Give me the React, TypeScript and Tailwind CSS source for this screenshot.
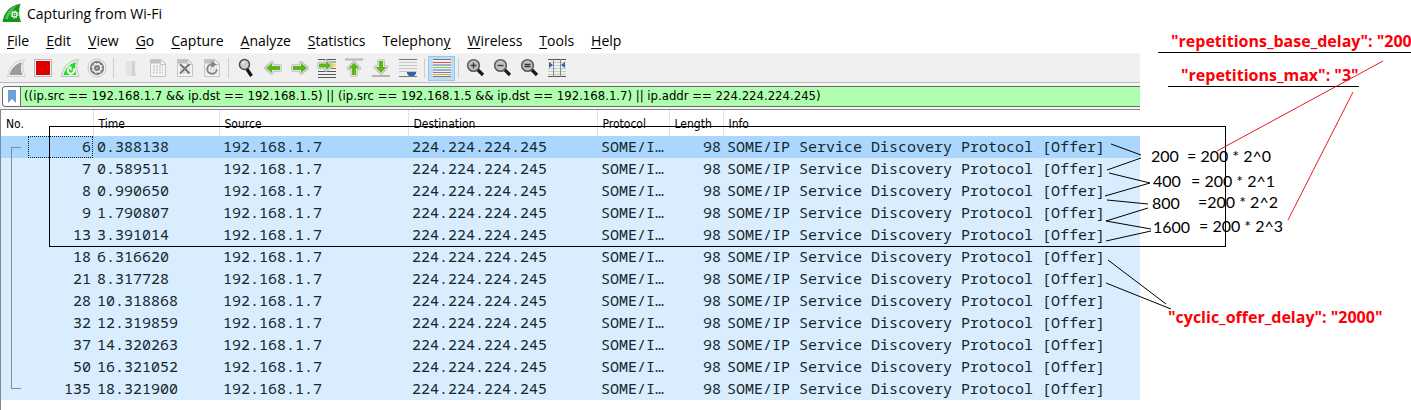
import type { ReactNode } from "react";

const menus: [string, string, string][] = [
  ["", "F", "ile"],
  ["", "E", "dit"],
  ["", "V", "iew"],
  ["", "G", "o"],
  ["", "C", "apture"],
  ["", "A", "nalyze"],
  ["", "S", "tatistics"],
  ["Telephon", "y", ""],
  ["", "W", "ireless"],
  ["", "T", "ools"],
  ["", "H", "elp"],
];

const packets: [string, string][] = [
  ["6", "0.388138"],
  ["7", "0.589511"],
  ["8", "0.990650"],
  ["9", "1.790807"],
  ["13", "3.391014"],
  ["18", "6.316620"],
  ["21", "8.317728"],
  ["28", "10.318868"],
  ["32", "12.319859"],
  ["37", "14.320263"],
  ["50", "16.321052"],
  ["135", "18.321900"],
];

function Icon({ children }: { children: ReactNode }) {
  return (
    <svg viewBox="0 0 20 20" className="size-5" fill="none" aria-hidden="true">
      {children}
    </svg>
  );
}

function ToolButton({ label, active, children }: { label: string; active?: boolean; children: ReactNode }) {
  return (
    <button
      type="button"
      aria-label={label}
      className={
        active
          ? "flex h-[25px] w-[27px] shrink-0 items-center justify-center border border-[#90c8f6] bg-[#c0dcf3]"
          : "flex h-[25px] w-[27px] shrink-0 items-center justify-center"
      }
    >
      <Icon>{children}</Icon>
    </button>
  );
}

function Separator() {
  return (
    <div className="flex w-[7px] shrink-0 justify-center">
      <div className="h-5 w-px bg-[#cdcdcd]" />
    </div>
  );
}

function Sheet({ children }: { children?: ReactNode }) {
  return (
    <>
      <path d="M2.500 1.500h10.500l4.500 4.500v12.500h-15z" fill="#f4f4f4" stroke="#c4c4c4" />
      <path d="M3 2h9v3.500H3z" fill="#c2c2c2" />
      <path d="M12.500 1.500v5h5z" fill="#fafafa" stroke="#c4c4c4" />
      <path d="M5 8.500h10M5 11.500h10M5 14.500h10" stroke="#d0d0d0" strokeWidth="2" strokeDasharray="2 1" />
      {children}
    </>
  );
}

function Magnifier({ children }: { children?: ReactNode }) {
  return (
    <>
      <path d="M11.500 11.500l5.500 5.500" stroke="#1c1c1c" strokeWidth="3.200" />
      <circle cx="7.500" cy="7.500" r="5.800" fill="#c2c2c2" stroke="#5c5c5c" strokeWidth="1.600" />
      {children}
    </>
  );
}

function Arrow({ d }: { d: string }) {
  return (
    <>
      <path d={d} stroke="#bcbcbc" strokeWidth="3.600" strokeLinejoin="round" />
      <path d={d} fill="#5cb51a" stroke="#eef2ea" strokeWidth="1.400" strokeLinejoin="round" />
      <path d={d} fill="#5cb51a" />
    </>
  );
}

function Toolbar() {
  return (
    <div
      role="toolbar"
      aria-label="Main toolbar"
      className="flex h-[30px] items-center border-t border-b border-t-[#f6f6f6] border-b-[#bcbcbc] bg-[#f0f0f0] pl-0.5"
    >
      <ToolButton label="Start capture">
        <path d="M1.500 18.500C3 10 7 3.500 18.500 1.500c-2.500 5-2 11 .5 17z" fill="#f4f4f4" stroke="#cfcfcf" />
        <path d="M3.500 17C5 11 9 6 16 4c-1.500 4.500-1.200 9 .5 13z" fill="#9b9b9b" />
      </ToolButton>
      <ToolButton label="Stop capture">
        <path d="M1.500 1.500h17v17h-17z" fill="#f4f4f4" stroke="#b5b5b5" />
        <path d="M3 3h14v14H3z" fill="#dc0000" />
      </ToolButton>
      <ToolButton label="Restart capture">
        <path d="M1.500 18.500C3 10 7 3.500 18.500 1.500c-2.500 5-2 11 .5 17z" fill="#f4f4f4" stroke="#bdbdbd" />
        <path d="M3.500 17C5 11 9 6 16 4c-1.500 4.500-1.200 9 .5 13z" fill="#1fe01f" />
        <path d="M8.500 10.500a3.100 3.100 0 1 0 4.800 0" stroke="#fff" strokeWidth="1.800" />
        <path d="M7 8.500h4.500V13z" fill="#fff" />
      </ToolButton>
      <ToolButton label="Capture options">
        <circle cx="10" cy="10" r="9" fill="#f4f4f4" stroke="#c8c8c8" />
        <circle cx="10" cy="10" r="7.200" fill="#808080" />
        <circle cx="10" cy="10" r="4.500" fill="#f0f0f0" />
        <circle cx="10" cy="10" r="4.600" stroke="#f0f0f0" strokeWidth="1.600" strokeDasharray="1.800 1.813" />
        <circle cx="10" cy="10" r="3" fill="#777" />
        <circle cx="10" cy="10" r="1.200" fill="#a8a8a8" />
      </ToolButton>
      <Separator />
      <ToolButton label="Open file">
        <path d="M4 3h7v15H5.500z" fill="#e3e3e3" />
        <path d="M11 3h3v11.500l1 3.500h-4z" fill="#d2d2d2" />
      </ToolButton>
      <ToolButton label="Save file">
        <Sheet />
      </ToolButton>
      <ToolButton label="Close file">
        <Sheet>
          <path d="M5 6l9.500 9.500M14.500 6L5 15.500" stroke="#757575" strokeWidth="1.800" />
        </Sheet>
      </ToolButton>
      <ToolButton label="Reload file">
        <Sheet>
          <path d="M10 6.200a4.800 4.800 0 1 0 4.800 5" stroke="#858585" strokeWidth="1.900" />
          <path d="M9.500 3l5 3.500-5 3.500z" fill="#858585" />
        </Sheet>
      </ToolButton>
      <Separator />
      <ToolButton label="Find packet">
        <path d="M10.500 10.500l5 7.500" stroke="#161616" strokeWidth="3.200" />
        <circle cx="8.500" cy="6.500" r="5" fill="#cfcfcf" stroke="#4c4c4c" strokeWidth="1.500" />
        <path d="M6 6a3 3 0 0 1 3-2" stroke="#fff" />
      </ToolButton>
      <ToolButton label="Previous packet">
        <Arrow d="M3 10l6-5v3h8v4H9v3z" />
      </ToolButton>
      <ToolButton label="Next packet">
        <Arrow d="M17 10l-6-5v3H3v4h8v3z" />
      </ToolButton>
      <ToolButton label="Go to packet">
        <path d="M1 1.500h18M1 13.500h18M1 16.500h18M1 19.500h18" stroke="#555" />
        <path d="M11 4h8M11 10.500h8" stroke="#777" />
        <path d="M13 5.500h6v3h-6z" fill="#f5df55" />
        <Arrow d="M14.500 7.500L9 3v2.500H2v4h7V12z" />
      </ToolButton>
      <ToolButton label="First packet">
        <path d="M1 1.500h18" stroke="#b5b5b5" strokeWidth="2" />
        <Arrow d="M10 4.500l5.500 6H12V17H8v-6.500H4.500z" />
      </ToolButton>
      <ToolButton label="Last packet">
        <path d="M1 18h18" stroke="#b5b5b5" strokeWidth="2" />
        <Arrow d="M10 15l5.500-6H12V3H8v6H4.500z" />
      </ToolButton>
      <ToolButton label="Auto scroll">
        <path d="M1 1.500h18M1 18.500h18" stroke="#777" />
        <path d="M1 4.500h18M1 7.500h18M1 10.500h18M1 13.500h18" stroke="#c6c9c2" />
        <path d="M9 14h9v1.500L16 18h-5l-2-2.500z" fill="#2f63ad" />
      </ToolButton>
      <Separator />
      <ToolButton label="Colorize packets" active>
        <path d="M1 1h18v18H1z" fill="#eef2ee" />
        <path d="M1 1.500h18M1 18.500h18" stroke="#777" />
        <path d="M1 4.500h18" stroke="#f04848" />
        <path d="M1 7h18" stroke="#4070c8" />
        <path d="M1 9.500h18" stroke="#87ce3c" />
        <path d="M1 12h18" stroke="#4866bb" />
        <path d="M1 14.500h18" stroke="#9175a8" />
        <path d="M1 16.500h18" stroke="#d7ad25" />
      </ToolButton>
      <Separator />
      <ToolButton label="Zoom in">
        <Magnifier>
          <path d="M4.500 7.500h6M7.500 4.500v6" stroke="#3c3c3c" strokeWidth="1.400" />
        </Magnifier>
      </ToolButton>
      <ToolButton label="Zoom out">
        <Magnifier>
          <path d="M4.500 7.500h6" stroke="#3c3c3c" strokeWidth="1.400" />
        </Magnifier>
      </ToolButton>
      <ToolButton label="Normal size">
        <Magnifier>
          <path d="M4.500 6.500h6M4.500 8.500h6" stroke="#3c3c3c" strokeWidth="1.300" />
        </Magnifier>
      </ToolButton>
      <ToolButton label="Resize columns">
        <path d="M1 1.500h18M1 18.500h18" stroke="#555" />
        <path d="M1 4.500h18M1 7.500h18M1 10.500h18M1 13.500h18M1 16.500h18" stroke="#c9ccc2" />
        <path d="M6.500 1v18M13.500 1v18" stroke="#8a8a8a" />
        <path d="M2 4l4 3-4 3zM18 4l-4 3 4 3z" fill="#2f63ad" />
      </ToolButton>
    </div>
  );
}

function Connector({ index }: { index: number }) {
  if (index === 0) return <span className="h-[11px] w-[10px] self-end border-t border-l border-[#858b91]" />;
  if (index === packets.length - 1)
    return <span className="h-[11px] w-[10px] self-start border-b border-l border-[#858b91]" />;
  return <span className="w-[10px] self-stretch border-l border-[#858b91]" />;
}

const headers = ["No.", "Time", "Source", "Destination", "Protocol", "Length", "Info"];

function PacketTable() {
  return (
    <table className="w-full table-fixed border-collapse">
      <colgroup>
        <col className="w-[92px]" />
        <col className="w-[126px]" />
        <col className="w-[189px]" />
        <col className="w-[189px]" />
        <col className="w-[72px]" />
        <col className="w-[54px]" />
        <col />
      </colgroup>
      <thead>
        <tr className="h-[26px] font-['DejaVu_Sans_Condensed','DejaVu_Sans',sans-serif] text-[12px]">
          {headers.map((h) => (
            <th
              key={h}
              scope="col"
              className="border-r border-[#e2e2e2] p-0 pt-0.5 pl-[5px] text-left font-normal last:border-r-0"
            >
              {h}
            </th>
          ))}
        </tr>
      </thead>
      <tbody className="align-top font-['Noto_Sans_Mono','DejaVu_Sans_Mono',monospace] text-[15px] leading-5 text-[#12272e]">
        {packets.map(([no, time], i) => (
          <tr key={no} className={i === 0 ? "h-[22px] bg-[#abd7ff]" : "h-[22px] bg-[#daedff]"}>
            <td className="p-0">
              <div className="flex h-[22px] pl-[10px]">
                <Connector index={i} />
                <span
                  className={
                    i === 0
                      ? "ml-[7px] flex-1 border border-dotted border-[#10202a] pr-px text-right leading-[18px]"
                      : "ml-[7px] flex-1 pr-0.5 text-right"
                  }
                >
                  {no}
                </span>
              </div>
            </td>
            <td className="p-0 pl-1">{time}</td>
            <td className="p-0 pl-1">192.168.1.7</td>
            <td className="p-0 pl-1">224.224.224.245</td>
            <td className="p-0 pl-1">SOME/I…</td>
            <td className="p-0 pr-0.5 text-right">98</td>
            <td className="p-0 pl-1 whitespace-nowrap">SOME/IP Service Discovery Protocol [Offer]</td>
          </tr>
        ))}
      </tbody>
    </table>
  );
}

function Annotations() {
  return (
    <div className="pointer-events-none absolute inset-0 overflow-hidden font-['Lato',sans-serif] text-[16px] leading-5 whitespace-nowrap text-black">
      <div className="absolute top-[126px] left-[49px] h-[121px] w-[1177px] border border-black" />
      <span className="absolute top-[146px] left-[1151px]">200</span>
      <span className="absolute top-[146px] left-[1187px]">= 200 * 2^0</span>
      <span className="absolute top-[171px] left-[1153px]">400</span>
      <span className="absolute top-[171px] left-[1191px]">= 200 * 2^1</span>
      <span className="absolute top-[193px] left-[1152px]">800</span>
      <span className="absolute top-[192px] left-[1198px]">=200 * 2^2</span>
      <span className="absolute top-[217px] left-[1153px]">1600</span>
      <span className="absolute top-[216px] left-[1199px]">= 200 * 2^3</span>
      <div className="font-['Open_Sans',sans-serif] font-bold text-[#fb0007]">
        <div className="absolute top-[31px] left-[1158px] h-[22px] w-[260px] border-b border-black pl-[13px]">
          "repetitions_base_delay": "200
        </div>
        <div className="absolute top-[65px] left-[1168px] h-[22px] w-[191px] border-b border-black pl-[13px]">
          "repetitions_max": "3"
        </div>
        <span className="absolute top-[307px] left-[1168px]">"cyclic_offer_delay": "2000"</span>
      </div>
      <svg width="1411" height="410" className="absolute top-0 left-0" fill="none" aria-hidden="true">
        <path
          d="M1111 144L1141 155M1141 158L1107 170M1109 173L1150 183L1105 196M1107 200L1148 204M1148 208L1106 221L1151 229M1151 231L1106 241M1108 260L1166 304M1106 283L1171 309"
          stroke="#000"
        />
        <path d="M1383 61L1217 151M1353 92L1288 220" stroke="#e81a24" />
      </svg>
    </div>
  );
}

export default function App() {
  return (
    <div className="relative flex min-h-screen overflow-hidden bg-white text-black">
      <main className="flex min-w-0 flex-[1140] flex-col">
        <header className="flex h-[26px] items-center gap-[5px] pl-0.5 font-['Open_Sans',sans-serif] text-[14px]">
          <svg viewBox="0 0 20 20" className="size-5" aria-hidden="true">
            <path d="M.5 19C2 10 7 3 18.500.8c-2 6-2 12 .5 18.200z" fill="#17941b" />
            <path d="M3 16C5 9 9 4 16 2.500c-4 2-8 6-10 13.500z" fill="#58c74f" />
            <circle cx="12.500" cy="11.500" r="2.500" fill="none" stroke="#e8f8e6" strokeWidth="1.300" />
            <circle cx="12.500" cy="11.500" r="3.700" fill="none" stroke="#e8f8e6" strokeDasharray="1.500 1.400" />
            <circle cx="12.500" cy="11.500" r=".9" fill="#e8f8e6" />
          </svg>
          <h1>Capturing from Wi-Fi</h1>
        </header>
        <nav className="flex h-[27px] items-center gap-[17px] pl-[7px] pt-0.5 font-['Open_Sans',sans-serif] text-[14px]">
          {menus.map(([before, key, after]) => (
            <button key={before + key + after} type="button" className="whitespace-nowrap">
              {before}
              <span className="underline underline-offset-2">{key}</span>
              {after}
            </button>
          ))}
        </nav>
        <Toolbar />
        <div className="flex h-[26px] items-center bg-[#f4f4f4] pl-0.5">
          <div className="flex h-[21px] flex-1 overflow-hidden rounded-l-sm border border-r-0 border-[#6b6b6b] bg-[#afffaf]">
            <button
              type="button"
              aria-label="Filter bookmarks"
              className="flex w-[18px] items-center justify-center border-r border-[#6b6b6b] bg-white"
            >
              <svg viewBox="0 0 8 13" className="h-[13px] w-2" aria-hidden="true">
                <path d="M0 0h8v13l-4-4-4 4z" fill="#6f9fd4" />
              </svg>
            </button>
            <input
              type="text"
              aria-label="Display filter"
              defaultValue="((ip.src == 192.168.1.7 && ip.dst == 192.168.1.5) || (ip.src == 192.168.1.5 && ip.dst == 192.168.1.7) || ip.addr == 224.224.224.245)"
              className="min-w-0 flex-1 bg-transparent pl-[3px] font-['DejaVu_Sans_Condensed','DejaVu_Sans',sans-serif] text-[13px] outline-none"
            />
          </div>
        </div>
        <div className="flex-1 border-t border-l border-[#828790]">
          <PacketTable />
        </div>
      </main>
      <aside className="flex-[271]" />
      <Annotations />
    </div>
  );
}
